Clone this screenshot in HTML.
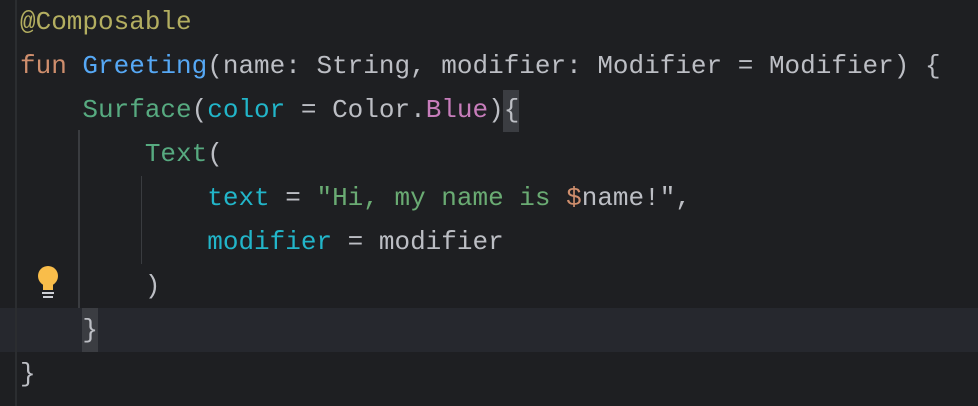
<!DOCTYPE html><html><head><style>
body{margin:0;width:978px;height:406px;background:#1e1f22;overflow:hidden;position:relative;font-family:"Liberation Mono",monospace;font-size:26px;}
.l{position:absolute;left:20px;height:44px;line-height:44px;white-space:pre;color:#bcbec4;}
.cur{position:absolute;left:0;top:308px;width:978px;height:44px;background:#26282e;}
.g{position:absolute;left:15px;top:0;width:2px;height:406px;background:#2b2d30;}
.ig{position:absolute;width:2px;background:#3a3c40;}
.bh{position:absolute;background:#3b3d42;width:16px;height:42px;}
.a{color:#b3ae60}.k{color:#cf8e6d}.f{color:#56a8f5}.c{color:#57aa80}.p{color:#22b5c9}.m{color:#c77dbb}.s{color:#6aab73}
</style></head><body>
<div class="cur"></div>
<div class="g"></div>
<div class="ig" style="left:78px;top:130px;height:178px"></div>
<div class="ig" style="left:141px;top:176px;height:88px;width:1px"></div>
<div class="bh" style="left:503px;top:90px"></div>
<div class="bh" style="left:82px;top:308px;height:44px"></div>
<div class="l" style="top:0"><span class="a">@Composable</span></div>
<div class="l" style="top:44px"><span class="k">fun</span> <span class="f">Greeting</span>(name: String, modifier: Modifier = Modifier) {</div>
<div class="l" style="top:88px">    <span class="c">Surface</span>(<span class="p">color</span> = Color.<span class="m">Blue</span>){</div>
<div class="l" style="top:132px">        <span class="c">Text</span>(</div>
<div class="l" style="top:176px">            <span class="p">text</span> = <span class="s">"Hi, my name is </span><span class="k">$</span>name!",</div>
<div class="l" style="top:220px">            <span class="p">modifier</span> = modifier</div>
<div class="l" style="top:264px">        )</div>
<div class="l" style="top:308px">    }</div>
<div class="l" style="top:352px">}</div>
<svg style="position:absolute;left:36px;top:264px" width="24" height="36" viewBox="0 0 24 36">
<circle cx="12" cy="12" r="10" fill="#f9bd4a"/><rect x="7" y="14" width="10" height="12" fill="#f9bd4a"/>
<rect x="6" y="28" width="12" height="2" fill="#ced0d6"/><rect x="7" y="32" width="10" height="2" fill="#ced0d6"/>
</svg>
</body></html>
